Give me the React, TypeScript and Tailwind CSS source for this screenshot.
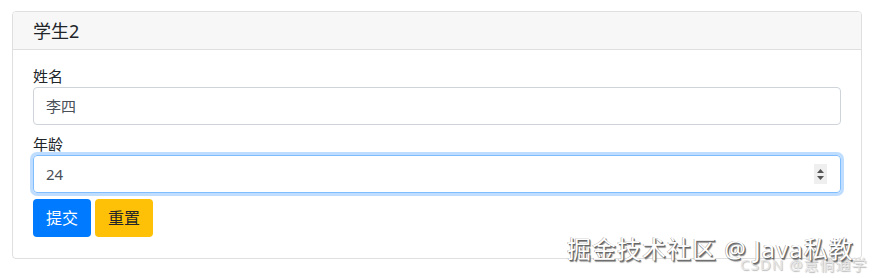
import React from "react";

const cjk = { fontFamily: '"Segoe UI", "Noto Sans", "Noto Sans CJK SC", sans-serif' };

export default function App() {
  return (
    <div className="relative w-[873px] h-[278px] bg-white overflow-hidden" style={cjk}>
      <div className="pt-[11px] pl-[12px] w-[862px]">
        <div className="border border-[#dfdfdf] rounded-[4px] overflow-hidden">
          <div className="h-[38px] bg-[#f7f7f7] border-b border-[#dfdfdf] pl-[20px] flex items-center text-[18px] text-[#212529] font-normal leading-none">
            学生2
          </div>
          <div className="px-[20px] pt-[15px] pb-[21px] text-[#212529]">
            <div className="text-[15px] leading-[22px]">姓名</div>
            <div className="h-[38px] border border-[#ced4da] rounded-[4px] px-[12px] flex items-center text-[15px] text-[#495057]">
              李四
            </div>
            <div className="text-[15px] leading-[22px] mt-[8px]">年龄</div>
            <div className="relative h-[38px] border border-[#80bdff] rounded-[4px] px-[12px] flex items-center text-[15px] text-[#495057] shadow-[0_0_0_3px_rgba(0,123,255,0.25)]">
              24
              <div className="absolute right-[13px] top-[8px] w-[13px] h-[20px] bg-[#efefef] flex flex-col items-center justify-center gap-[3px]">
                <svg width="7" height="4" viewBox="0 0 7 4"><path d="M0 4 L3.5 0 L7 4 Z" fill="#555" /></svg>
                <svg width="7" height="4" viewBox="0 0 7 4"><path d="M0 0 L3.5 4 L7 0 Z" fill="#555" /></svg>
              </div>
            </div>
            <div className="flex gap-[4px] mt-[6px]">
              <button className="h-[38px] w-[58px] rounded-[4px] bg-[#007bff] text-white text-[16px]">提交</button>
              <button className="h-[38px] w-[58px] rounded-[4px] bg-[#ffc107] text-[#212529] text-[16px]">重置</button>
            </div>
          </div>
        </div>
      </div>
      <div
        className="absolute left-[740px] top-[255px] text-[15px] leading-[18px] tracking-[1px] text-[#e6e6e6] whitespace-nowrap"
        style={{ textShadow: "1px 1px 1px #bbb" }}
      >
        CSDN @意倘通学
      </div>
      <div
        className="absolute left-[567px] top-[234px] text-[24px] leading-[30px] tracking-[1px] text-white whitespace-nowrap"
        style={{ textShadow: "1px 1px 0 #666, -0.5px -0.5px 0 #999, 1.5px 1.5px 1px #888" }}
      >
        掘金技术社区 @ Java私教
      </div>
    </div>
  );
}
